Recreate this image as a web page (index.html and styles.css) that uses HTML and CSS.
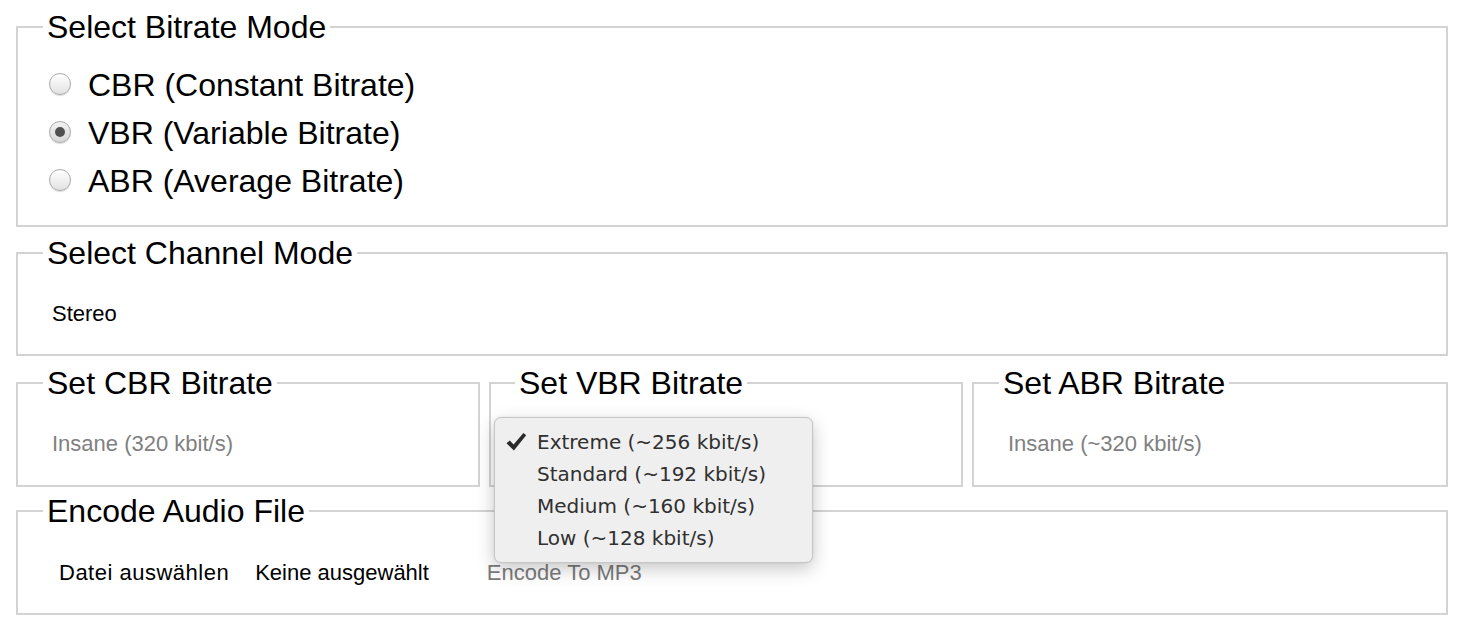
FILE: index.html
```html
<!DOCTYPE html>
<html lang="de">
<head>
<meta charset="utf-8">
<title>MP3 Encoder</title>
<link rel="stylesheet" href="styles.css">
</head>
<body>
<main class="page">
  <fieldset class="box box-mode">
    <legend>Select Bitrate Mode</legend>
    <label class="radio-row"><span class="radio"></span><span>CBR (Constant Bitrate)</span></label>
    <label class="radio-row"><span class="radio checked"></span><span>VBR (Variable Bitrate)</span></label>
    <label class="radio-row"><span class="radio"></span><span>ABR (Average Bitrate)</span></label>
  </fieldset>

  <fieldset class="box box-channel">
    <legend>Select Channel Mode</legend>
    <div class="field-row"><span class="select-text">Stereo</span></div>
  </fieldset>

  <div class="bitrate-row">
    <fieldset class="box box-rate">
      <legend>Set CBR Bitrate</legend>
      <div class="field-row"><span class="select-text disabled">Insane (320 kbit/s)</span></div>
    </fieldset>
    <fieldset class="box box-rate vbr">
      <legend>Set VBR Bitrate</legend>
      <div class="field-row"></div>
      <div class="menu">
        <div class="menu-item"><svg class="check" viewBox="0 0 22 20" width="22" height="20"><path d="M1.5 11.2 L4.8 8.4 L8.6 12.6 L18.4 1 L21.2 3.3 L8.9 18.6 Z" fill="#2a2a2a"/></svg><span>Extreme (~256 kbit/s)</span></div>
        <div class="menu-item"><span>Standard (~192 kbit/s)</span></div>
        <div class="menu-item"><span>Medium (~160 kbit/s)</span></div>
        <div class="menu-item"><span>Low (~128 kbit/s)</span></div>
      </div>
    </fieldset>
    <fieldset class="box box-rate">
      <legend>Set ABR Bitrate</legend>
      <div class="field-row"><span class="select-text disabled">Insane (~320 kbit/s)</span></div>
    </fieldset>
  </div>

  <fieldset class="box box-encode">
    <legend>Encode Audio File</legend>
    <div class="field-row encode-row">
      <span class="file-btn">Datei auswählen</span>
      <span class="file-name">Keine ausgewählt</span>
      <span class="encode-btn">Encode To MP3</span>
    </div>
  </fieldset>
</main>
</body>
</html>
```
FILE: styles.css
```css
html, body {
  margin: 0;
  padding: 0;
  background: #ffffff;
}

body {
  font-family: "Liberation Sans", Arial, Helvetica, sans-serif;
  color: #000;
}

.page {
  padding: 8px 16px 0 16px;
  display: flex;
  flex-direction: column;
}

.box {
  margin: 0;
  border: 2px solid #d3d3d3;
  padding: 0 0 0 25px;
  min-width: 0;
}

.box legend {
  font-size: 32px;
  line-height: 38px;
  padding: 0 4px;
  margin-left: 0;
}

.box-mode {
  padding-top: 15px;
  padding-bottom: 20px;
}

.radio-row {
  display: flex;
  align-items: center;
  height: 48px;
  font-size: 32px;
}

.radio {
  width: 22px;
  height: 22px;
  border-radius: 50%;
  box-sizing: border-box;
  border: 1px solid #aaaaaa;
  background: linear-gradient(#ffffff, #e2e2e2);
  box-shadow: 0 1px 1px rgba(0, 0, 0, 0.15);
  margin: -3px 17px 0 6px;
  display: flex;
  align-items: center;
  justify-content: center;
  flex: none;
}

.radio.checked {
  background: linear-gradient(#f2f2f2, #d8d8d8);
}

.radio.checked::after {
  content: "";
  width: 10px;
  height: 10px;
  border-radius: 50%;
  background: #505050;
}

.box-channel {
  margin-top: 7px;
  padding-top: 28px;
  padding-bottom: 26px;
}

.field-row {
  display: flex;
  align-items: center;
  height: 28px;
  font-size: 22px;
}

.select-text {
  padding-left: 9px;
}

.select-text.disabled {
  color: #808080;
}

.bitrate-row {
  margin-top: 8px;
  display: grid;
  grid-template-columns: 464px 474px 1fr;
  column-gap: 9px;
}

.box-rate {
  padding-top: 28px;
  padding-bottom: 27px;
}

.box-rate.vbr {
  position: relative;
  padding-left: 24px;
}

.menu {
  position: absolute;
  left: 3px;
  top: 15px;
  width: 319px;
  box-sizing: border-box;
  padding: 8px 0 8px;
  background: #efefef;
  border: 1px solid #c6c6c6;
  border-radius: 7px;
  box-shadow: 0 6px 18px rgba(0, 0, 0, 0.22), 0 0 2px rgba(0, 0, 0, 0.1);
  font-family: "DejaVu Sans", "Liberation Sans", sans-serif;
  font-size: 20px;
  color: #303030;
  z-index: 5;
}

.menu-item {
  position: relative;
  height: 32px;
  display: flex;
  align-items: center;
  padding-left: 42px;
}

.check {
  position: absolute;
  left: 10px;
  top: 6px;
}

.box-encode {
  margin-top: 5px;
  padding-top: 29px;
  padding-bottom: 26px;
}

.encode-row {
  font-size: 22px;
}

.file-btn {
  margin-left: 16px;
  letter-spacing: 0.5px;
}

.file-name {
  margin-left: 26px;
}

.encode-btn {
  margin-left: 58px;
  color: #7b7b7b;
}
```
